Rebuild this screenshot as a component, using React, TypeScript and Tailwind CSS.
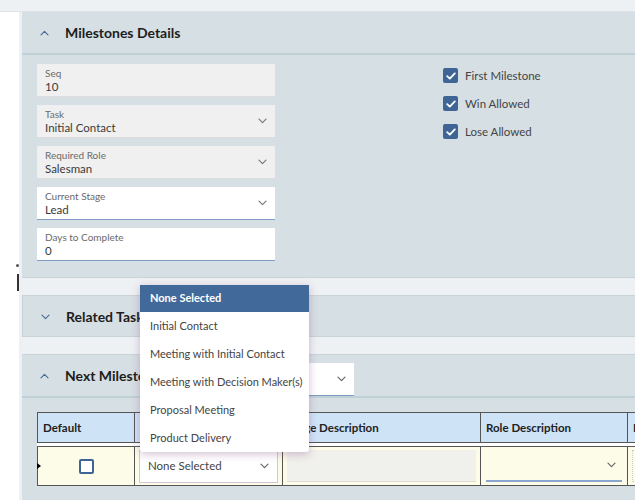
import React from "react";

function Chevron({ up = false, className = "" }: { up?: boolean; className?: string }) {
  return (
    <svg width="9" height="6" viewBox="0 0 9 6" className={className} fill="none">
      <path
        d={up ? "M1 4.8 L4.5 1.3 L8 4.8" : "M1 1.2 L4.5 4.7 L8 1.2"}
        stroke="currentColor"
        strokeWidth="1.2"
        strokeLinecap="round"
        strokeLinejoin="round"
      />
    </svg>
  );
}

function Check() {
  return (
    <span className="flex h-[15px] w-[15px] items-center justify-center rounded-[2px] bg-[#3e6595]">
      <svg width="10" height="8" viewBox="0 0 10 8" fill="none">
        <path d="M1.2 4.2 L3.8 6.6 L8.8 1.4" stroke="white" strokeWidth="1.8" strokeLinecap="round" strokeLinejoin="round" />
      </svg>
    </span>
  );
}

function Field({
  label,
  value,
  select = false,
  white = false,
}: {
  label: string;
  value: string;
  select?: boolean;
  white?: boolean;
}) {
  return (
    <div
      className={
        "flex h-[33px] w-[238px] items-center justify-between pl-[8px] pr-[8px] " +
        (white ? "bg-white border-b border-[#7f9cc4]" : "bg-[#f0f0f0] border-b border-[#dcdcdc]")
      }
    >
      <div className="flex flex-col leading-none">
        <span className="text-[10px] text-[#6a6a6a]">{label}</span>
        <span className="mt-[3px] text-[11.5px] text-[#3a3a3a]">{value}</span>
      </div>
      {select && <Chevron className="text-[#777]" />}
    </div>
  );
}

function PanelHeader({ title, up, children }: { title: string; up: boolean; children?: React.ReactNode }) {
  return (
    <div className="flex h-[41px] items-center">
      <Chevron up={up} className="ml-[18px] text-[#4b6d93]" />
      <span className="ml-[16px] w-[120px] shrink-0 whitespace-nowrap text-[14px] font-bold text-[#1d1d1d]">{title}</span>
      {children}
    </div>
  );
}

const options = [
  "Initial Contact",
  "Meeting with Initial Contact",
  "Meeting with Decision Maker(s)",
  "Proposal Meeting",
  "Product Delivery",
];

export default function App() {
  return (
    <div
      className="relative h-[500px] w-full overflow-hidden bg-white"
      style={{ fontFamily: "Lato, 'Open Sans', sans-serif" }}
    >
      <div className="h-[12px] bg-[#eef1f4] border-b border-[#dfe4e8]" />
      <div className="flex">
        <div className="relative w-[19px] shrink-0 bg-white">
          <span className="absolute left-[16px] top-[252px] h-[3px] w-[3px] rounded-full bg-[#555]" />
          <span className="absolute left-[17px] top-[262px] h-[17px] w-[1.5px] bg-[#333]" />
        </div>
        <div className="min-w-0 flex-1 overflow-hidden bg-[#eef1f4] pl-[3px]">
          {/* Milestones Details */}
          <div className="h-[266px] bg-[#d6dfe3] border-b border-[#c9d4d9]">
            <div className="border-b-2 border-[#bfd0d7]">
              <PanelHeader title="Milestones Details" up />
            </div>
            <div className="flex pl-[15px] pt-[9px]">
              <div className="flex flex-col gap-[8px]">
                <Field label="Seq" value="10" />
                <Field label="Task" value="Initial Contact" select />
                <Field label="Required Role" value="Salesman" select />
                <Field label="Current Stage" value="Lead" select white />
                <Field label="Days to Complete" value="0" white />
              </div>
              <div className="ml-[168px] flex flex-col gap-[13px] pt-[4px]">
                {["First Milestone", "Win Allowed", "Lose Allowed"].map((t) => (
                  <div key={t} className="flex h-[15px] items-center gap-[7px]">
                    <Check />
                    <span className="text-[11.5px] leading-none text-[#444]">{t}</span>
                  </div>
                ))}
              </div>
            </div>
          </div>

          <div className="h-[17px]" />

          {/* Related Tasks */}
          <div className="h-[42px] bg-[#d6dfe3] border border-r-0 border-[#c9d4d9]">
            <PanelHeader title="Related Tasks" up={false} />
          </div>

          <div className="h-[17px]" />

          {/* Next Milestones */}
          <div className="h-[160px] bg-[#d6dfe3] border-t border-[#c9d4d9]">
            <div className="border-b-2 border-[#bfd0d7]">
              <PanelHeader title="Next Milestones" up>
                <div className="ml-[29px] mt-[8px] flex h-[33px] w-[140px] items-center justify-end bg-white pr-[8px] border-b border-[#7f9cc4]">
                  <Chevron className="text-[#666]" />
                </div>
              </PanelHeader>
            </div>

            <div className="pl-[15px] pt-[14px]">
              <div className="flex h-[31px] w-[700px] bg-[#cfe3f7] border border-[#555] text-[11.5px] font-bold text-[#222]">
                <div className="flex w-[97px] items-center pl-[5px] border-r border-[#555]">Default</div>
                <div className="flex w-[148px] items-center pl-[5px] border-r border-[#555]">Next Stage</div>
                <div className="flex w-[198px] items-center pl-[5px] border-r border-[#555]">Stage Description</div>
                <div className="flex w-[147px] items-center pl-[5px] border-r border-[#555]">Role Description</div>
                <div className="flex flex-1 items-center pl-[5px]">Days</div>
              </div>
              <div className="h-[3px] bg-white" />
              <div className="relative flex h-[40px] w-[700px] bg-[#fcfce9] border border-[#555]">
                <span className="absolute left-[-1px] top-[16px] h-0 w-0 border-y-[3.5px] border-l-[4px] border-y-transparent border-l-black" />
                <div className="flex w-[97px] items-center justify-center border-r border-[#555]">
                  <span className="h-[15px] w-[15px] rounded-[2px] border-2 border-[#3e6595] bg-white" />
                </div>
                <div className="flex w-[148px] items-center border-r border-[#555] px-[4px]">
                  <div className="flex h-[33px] w-full items-center justify-between bg-white pl-[8px] pr-[8px] border border-[#d9c3dc]">
                    <span className="text-[11.5px] text-[#444]">None Selected</span>
                    <Chevron className="text-[#666]" />
                  </div>
                </div>
                <div className="flex w-[198px] items-center border-r border-[#555] px-[4px]">
                  <div className="h-[32px] w-full bg-[#f0f0ec] border-b border-[#dcdcd4]" />
                </div>
                <div className="flex w-[147px] items-center border-r border-[#555] px-[5px]">
                  <div className="flex h-[32px] w-full items-center justify-end pr-[6px] border-b-2 border-[#8aa6cf]">
                    <Chevron className="text-[#666]" />
                  </div>
                </div>
                <div className="flex flex-1 items-center px-[4px]">
                  <div className="h-[32px] w-full border border-dotted border-[#ccc]" />
                </div>
              </div>
            </div>
          </div>
        </div>
      </div>

      {/* open dropdown */}
      <div className="absolute left-[140px] top-[285px] w-[169px] overflow-hidden rounded-b-[3px] bg-white shadow-[0_2px_8px_rgba(130,70,130,0.35)]">
        <div className="flex h-[27px] items-center bg-[#41699a] pl-[10px] text-[11px] font-bold text-white">
          None Selected
        </div>
        {options.map((o) => (
          <div key={o} className="flex h-[28px] items-center whitespace-nowrap pl-[10px] text-[11px] text-[#444]">
            {o}
          </div>
        ))}
      </div>
    </div>
  );
}
